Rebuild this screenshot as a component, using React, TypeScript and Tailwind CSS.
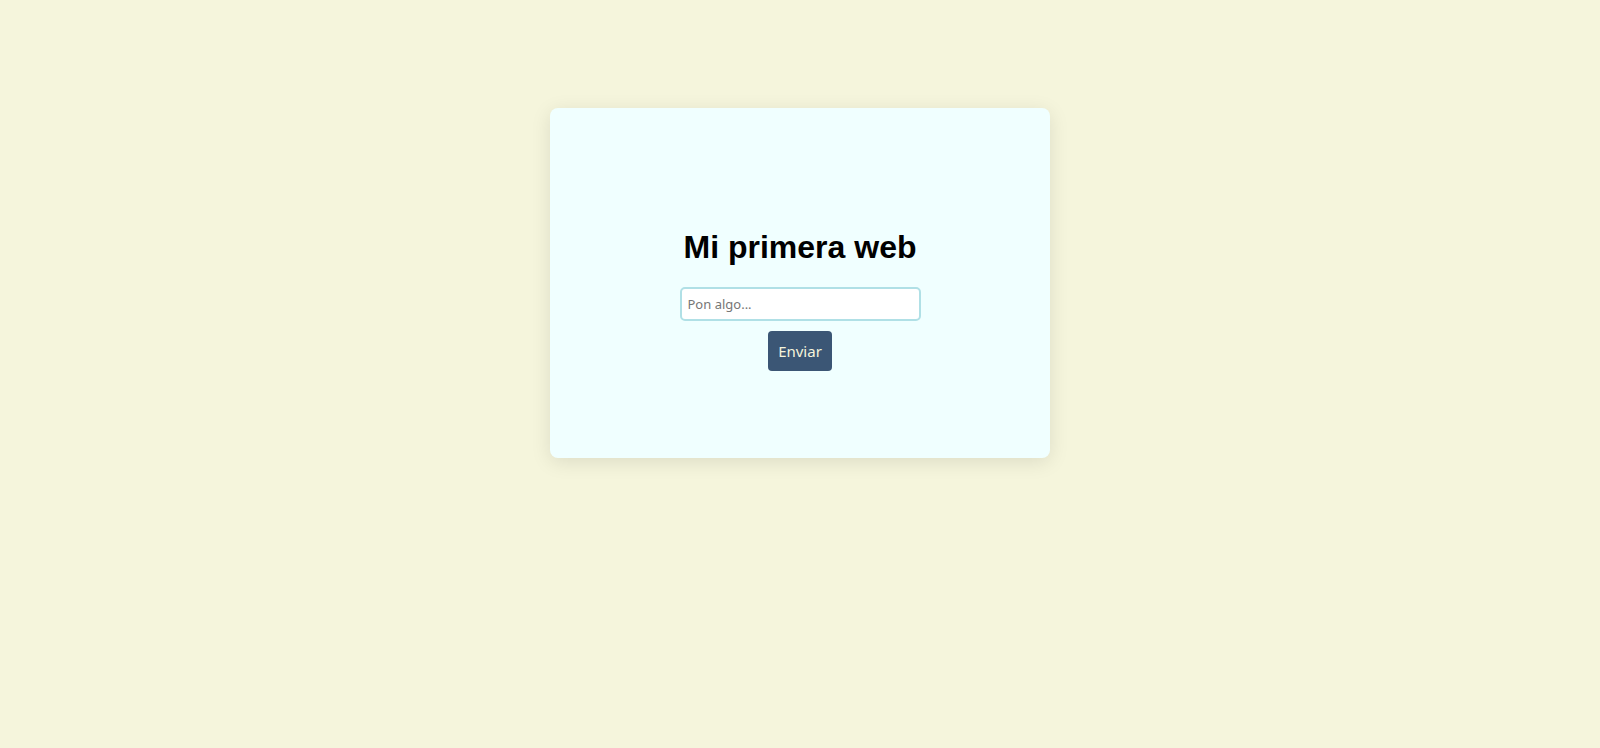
import React from "react";

export default function App() {
  return (
    <div className="min-h-[748px] w-full bg-[#f5f5dc] pt-[108px]">
      <div className="mx-auto flex h-[350px] w-[500px] flex-col items-center rounded-[8px] bg-[#f0ffff] pt-[121px] shadow-[0_4px_20px_rgba(0,0,0,0.1)]">
        <h1 className="mb-[21px] text-[32px] font-bold leading-[37px] text-black [font-family:'Liberation_Sans',Arial,sans-serif]">
          Mi primera web
        </h1>
        <input
          type="text"
          placeholder="Pon algo..."
          className="h-[34px] w-[241px] rounded-[5px] border-2 border-[#b0e0e6] bg-white px-[6px] text-[13px] text-black outline-none placeholder:text-[#767676] [font-family:'Noto_Sans',sans-serif]"
        />
        <button className="mt-[10px] h-[40px] w-[64px] rounded-[4px] bg-[#3b5675] text-[15px] text-[#f5f5dc] [font-family:'Noto_Sans',sans-serif]">
          Enviar
        </button>
      </div>
    </div>
  );
}
